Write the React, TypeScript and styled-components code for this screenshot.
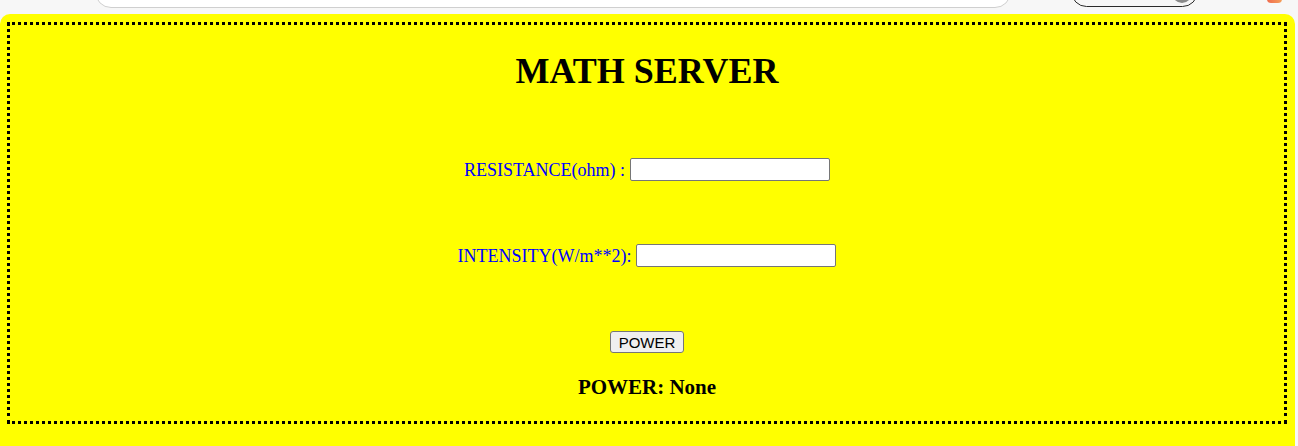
import React from "react";
import styled, { createGlobalStyle } from "styled-components";

const Global = createGlobalStyle`
  html, body { margin: 0; padding: 0; background: #f7f7f7; overflow: hidden; }
  body { font-family: "Liberation Serif", "Times New Roman", serif; }
`;

const Page = styled.div`
  width: 1298px;
  height: 446px;
  display: flex;
  flex-direction: column;
  overflow: hidden;
`;

const ChromeStrip = styled.div`
  height: 14px;
  flex: none;
  display: flex;
  align-items: flex-start;
  overflow: hidden;
`;

const SearchBar = styled.div`
  margin-left: 95px;
  margin-top: -24px;
  width: 916px;
  height: 32px;
  box-sizing: border-box;
  background: #ffffff;
  border: 1px solid #cfcfcf;
  border-radius: 18px;
  flex: none;
`;

const Pill = styled.div`
  margin-left: 60px;
  margin-top: -24px;
  width: 127px;
  height: 31px;
  box-sizing: border-box;
  border: 1.5px solid #2a2a2a;
  border-radius: 16px;
  display: flex;
  justify-content: flex-end;
  align-items: flex-end;
  padding: 0 5px 3px 0;
  flex: none;
`;

const Knob = styled.div`
  width: 20px;
  height: 20px;
  border-radius: 50%;
  background: #8a8a8a;
`;

const Badge = styled.div`
  margin-left: 69px;
  margin-top: -12px;
  width: 15px;
  height: 15px;
  border-radius: 4px;
  background: linear-gradient(90deg, #f06b4e, #f5a05a);
  flex: none;
`;

const Panel = styled.div`
  width: 1295px;
  flex: 1;
  min-height: 460px;
  background: #ffff00;
  border-radius: 10px 10px 0 0;
  box-sizing: border-box;
  padding: 8px 8px 0 7px;
`;

const Frame = styled.div`
  border: 3px dotted #000000;
  height: 402px;
  box-sizing: border-box;
  display: flex;
  flex-direction: column;
  align-items: center;
  padding-top: 26px;
`;

const Title = styled.h1`
  margin: 0;
  font-family: "Liberation Serif", "Times New Roman", serif;
  font-size: 36px;
  font-weight: bold;
  line-height: 1.15;
  color: #000000;
`;

const Row = styled.div<{ $gapTop: number; $space: number }>`
  margin-top: ${(p) => p.$gapTop}px;
  display: flex;
  align-items: center;
  gap: ${(p) => p.$space}px;
`;

const Label = styled.label`
  font-family: "Liberation Serif", "Times New Roman", serif;
  font-size: 18px;
  line-height: 1.15;
  color: #0000ff;
  white-space: pre;
`;

const Field = styled.input`
  width: 200px;
  height: 23px;
  box-sizing: border-box;
  border: 1px solid #767676;
  border-radius: 2px;
  background: #ffffff;
  padding: 1px 2px;
  margin: 0;
  font-size: 13px;
`;

const Button = styled.button`
  margin-top: 64px;
  height: 22px;
  box-sizing: border-box;
  padding: 0 8px;
  font-family: "Liberation Sans", Arial, sans-serif;
  font-size: 15px;
  color: #000000;
  background: #efefef;
  border: 1px solid #767676;
  border-radius: 3px;
  line-height: 1;
`;

const Result = styled.h3`
  margin: 22px 0 0 0;
  font-family: "Liberation Serif", "Times New Roman", serif;
  font-size: 21px;
  font-weight: bold;
  line-height: 1.15;
  color: #000000;
`;

export default function App() {
  return (
    <>
      <Global />
      <Page>
        <ChromeStrip>
          <SearchBar />
          <Pill>
            <Knob />
          </Pill>
          <Badge />
        </ChromeStrip>
        <Panel>
          <Frame>
            <Title>MATH SERVER</Title>
            <Row $gapTop={66} $space={5}>
              <Label>RESISTANCE(ohm) :</Label>
              <Field type="text" />
            </Row>
            <Row $gapTop={63} $space={5}>
              <Label>INTENSITY(W/m**2):</Label>
              <Field type="text" />
            </Row>
            <Button>POWER</Button>
            <Result>POWER: None</Result>
          </Frame>
        </Panel>
      </Page>
    </>
  );
}
